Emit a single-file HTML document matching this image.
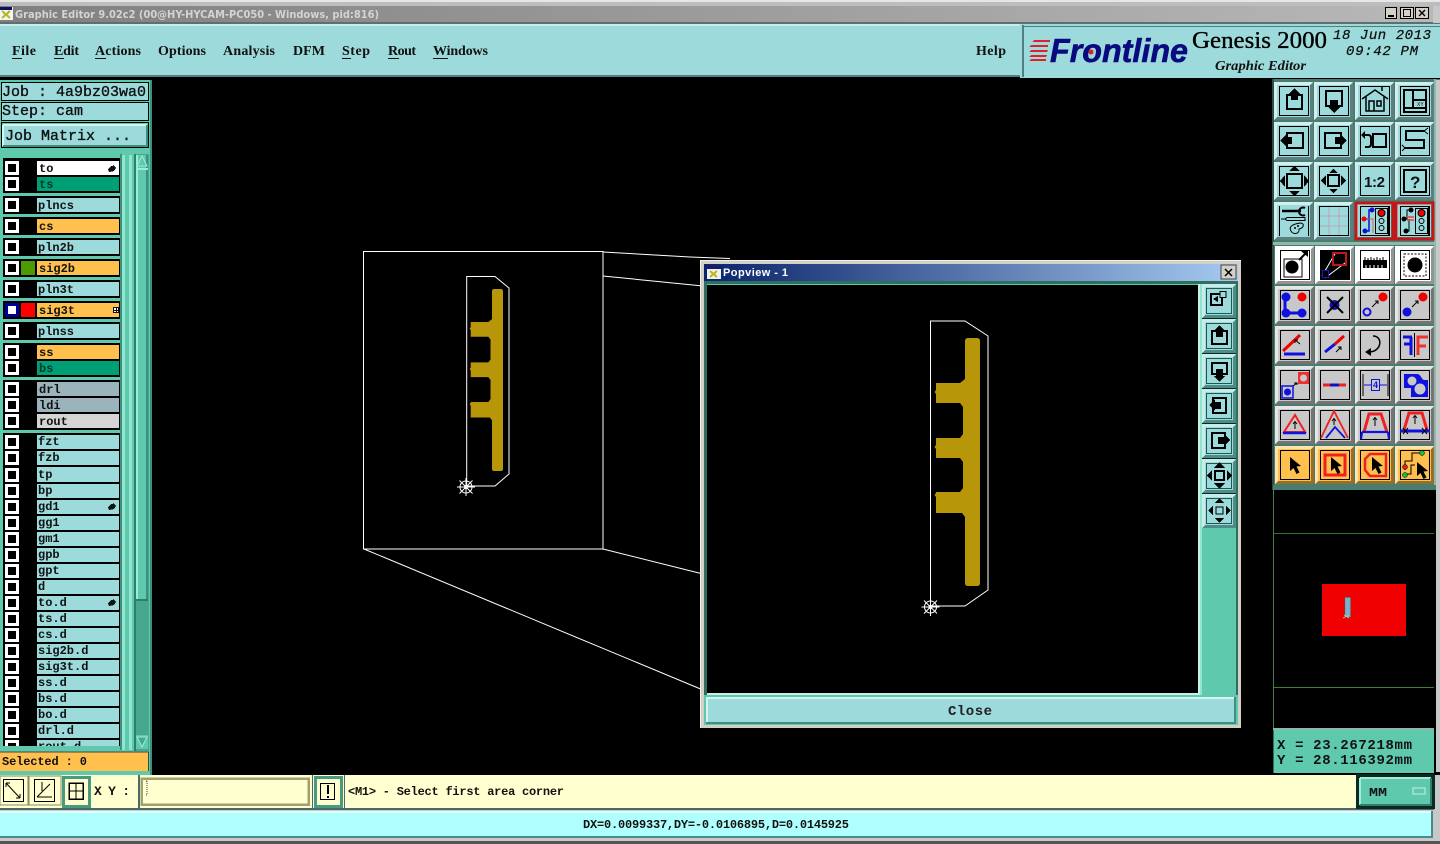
<!DOCTYPE html>
<html><head><meta charset="utf-8"><title>Graphic Editor</title>
<style>
html,body{margin:0;padding:0;background:#000;width:1440px;height:844px;overflow:hidden}
svg{display:block}
.m{font-family:"Liberation Mono",monospace;font-weight:bold}
.s{font-family:"Liberation Serif",serif;font-weight:bold}
.l{font-family:"Liberation Mono",monospace;font-weight:bold;font-size:12px;fill:#111}
</style></head><body>
<svg width="1440" height="844" viewBox="0 0 1440 844" xmlns="http://www.w3.org/2000/svg" shape-rendering="crispEdges">
<defs>
<linearGradient id="tg" x1="0" x2="1" y1="0" y2="0"><stop offset="0" stop-color="#808080"/><stop offset="1" stop-color="#b8b8b8"/></linearGradient>
<linearGradient id="pg" x1="0" x2="1" y1="0" y2="0"><stop offset="0" stop-color="#0a246a"/><stop offset="1" stop-color="#a6caf0"/></linearGradient>
<g id="bev"><rect width="39" height="38"/><polygon points="0,0 39,0 36,3 3,3 3,35 0,38" fill="#fff" fill-opacity=".55"/><polygon points="39,38 0,38 3,35 36,35 36,3 39,0" fill="#000" fill-opacity=".42"/><rect x="5.5" y="4.5" width="29" height="29" fill="none" stroke="#000"/></g>
<g id="sb"><rect width="34" height="34"/><polygon points="0,0 34,0 31,3 3,3 3,31 0,34" fill="#fff" fill-opacity=".45"/><polygon points="34,34 0,34 3,31 31,31 31,3 34,0" fill="#004030" fill-opacity=".5"/><rect x="4.5" y="4.5" width="25" height="25" fill="none" stroke="#1a5a50"/></g>
<g id="cur"><polygon points="15,11 15,25 18.5,22 21.5,28 24.5,26.5 21.5,20.5 26,20"/></g>
<g id="cross" fill="none" stroke="#fff" stroke-width="1" shape-rendering="auto"><circle r="6"/><path d="M-9,0H9M0,-9V9M-6.5,-6.5L6.5,6.5M-6.5,6.5L6.5,-6.5"/><circle r="1.5" fill="#fff"/></g>
<g id="cu"><path fill="#b8960a" shape-rendering="auto" d="M968,338H977Q980,338 980,341V583Q980,586 977,586H968Q965,586 965,583V517L962,513H936V503V497L934.500,495L936,493V492H960L963,488V462L960,458H936V449L934.500,447L936,445V438H960L963,434V407L960,403H936V394L934.500,392L936,390V383H960L965,379V341Q965,338 968,338Z"/></g>
<g id="chk"><rect x="0" y="0" width="14" height="14" fill="#fff"/><rect x="3" y="3" width="8" height="8" fill="#000"/></g>
<g id="hand"><polygon points="0,4 3,1 5,1 5,0 7,2 8,3 6,6 1,7"/></g>
</defs>

<rect width="1440" height="844" fill="#000"/>
<!-- top frame -->
<rect width="1440" height="2" fill="#e6e6e6"/>
<rect y="2" width="1440" height="4" fill="#bdbdbd"/>
<rect y="6" width="1440" height="17" fill="url(#tg)"/>
<rect y="22" width="1440" height="2" fill="#5f6f6f"/>
<rect y="24" width="1440" height="2" fill="#c8ecec"/>
<rect y="26" width="1440" height="49" fill="#9ddadb"/>
<rect y="75" width="1022" height="2" fill="#4f7f7f"/>
<rect y="77" width="1440" height="3" fill="#000"/>
<!-- title icon -->
<rect x="0" y="7" width="13" height="13" fill="#f4f4f4"/><rect x="0" y="7" width="12" height="3" fill="#101060"/>
<path d="M2,11L10,18M10,11L2,18" stroke="#b8b820" stroke-width="2"/>
<text x="15" y="18" font-family="'DejaVu Sans',sans-serif" font-weight="bold" font-size="11" fill="#d4d4d4" textLength="364" lengthAdjust="spacingAndGlyphs" shape-rendering="auto">Graphic Editor 9.02c2 (00@HY-HYCAM-PC050 - Windows, pid:816)</text>
<!-- win buttons -->
<g stroke="#000" fill="#d4d0c8"><rect x="1385.5" y="7.5" width="11" height="11"/><rect x="1400.5" y="7.5" width="13" height="11"/><rect x="1415.5" y="7.5" width="13" height="11"/></g>
<rect x="1388" y="15" width="6" height="2" fill="#000"/><rect x="1403.5" y="9.5" width="7" height="7" fill="none" stroke="#000"/><path d="M1419,10L1425,16M1425,10L1419,16" stroke="#000" stroke-width="1.4" shape-rendering="auto"/>
<rect x="1433" y="6" width="7" height="17" fill="#c8c8c8"/>
<!-- menu -->
<g class="s" font-size="14" fill="#111" shape-rendering="auto">
<text x="12" y="55" textLength="24">File</text><text x="54" y="55" textLength="25">Edit</text><text x="95" y="55" textLength="46">Actions</text><text x="158" y="55" textLength="48">Options</text><text x="223" y="55" textLength="52">Analysis</text><text x="293" y="55" textLength="32">DFM</text><text x="342" y="55" textLength="28">Step</text><text x="388" y="55" textLength="28">Rout</text><text x="433" y="55" textLength="55">Windows</text><text x="976" y="55" textLength="30">Help</text>
</g>
<g fill="#111"><rect x="12" y="58" width="10" height="1"/><rect x="54" y="58" width="10" height="1"/><rect x="95" y="58" width="11" height="1"/><rect x="342" y="58" width="9" height="1"/><rect x="388" y="58" width="11" height="1"/><rect x="433" y="58" width="15" height="1"/></g>
<!-- logo area -->
<rect x="1020" y="24" width="420" height="54" fill="#9ddadb"/>
<rect x="1022" y="25" width="2" height="52" fill="#4f8080"/><rect x="1024" y="26" width="416" height="1" fill="#4f7f7f"/>
<g fill="#e0202a"><polygon points="1034,40 1050,40 1050,42 1032,42"/><polygon points="1031,45 1048,45 1048,47 1029,47"/><polygon points="1031,50 1048,50 1047,52 1029,52"/><polygon points="1031,55 1047,55 1046,57 1029,57"/><polygon points="1031,59 1046,59 1046,61 1029,61"/></g>
<g shape-rendering="auto">
<text x="1050" y="62" font-family="'Liberation Sans',sans-serif" font-weight="bold" font-style="italic" font-size="33" fill="#0a0a80" stroke="#0a0a80" stroke-width=".6" textLength="138" lengthAdjust="spacingAndGlyphs">Frontline</text>
<circle cx="1091" cy="52" r="2.5" fill="#e02020"/>
<text x="1192" y="48" font-family="'Liberation Serif',serif" font-size="24" fill="#000" stroke="#000" stroke-width=".35" textLength="135" lengthAdjust="spacingAndGlyphs">Genesis 2000</text>
<text x="1215" y="70" class="s" font-style="italic" font-size="14" fill="#111" textLength="91" lengthAdjust="spacingAndGlyphs">Graphic Editor</text>
<text x="1333" y="39" font-family="'Liberation Mono',monospace" font-style="italic" font-size="14" fill="#111" stroke="#111" stroke-width=".25" textLength="98">18 Jun 2013</text>
<text x="1346" y="55" font-family="'Liberation Mono',monospace" font-style="italic" font-size="14" fill="#111" stroke="#111" stroke-width=".25" textLength="72">09:42 PM</text>
</g>

<!-- LEFT PANEL -->
<rect x="0" y="80" width="152" height="695" fill="#5ec9ad"/>
<rect x="150" y="80" width="2" height="695" fill="#3f8f80"/>
<g fill="#9ddadb" stroke="#000"><rect x="1.5" y="82.5" width="147" height="18"/><rect x="1.5" y="102.5" width="147" height="18"/></g>
<rect x="1.5" y="122.5" width="147" height="25" fill="#5ec9ad" stroke="#000"/>
<rect x="3" y="125" width="144" height="21" fill="#9ddadb"/>
<path d="M3,125H147M3,125V146" stroke="#d4f4f0" stroke-width="2" fill="none"/><path d="M147,125V146H3" stroke="#3f8f80" stroke-width="2" fill="none"/>
<g font-family="'Liberation Mono',monospace" font-size="15" fill="#111" stroke="#111" stroke-width=".35" shape-rendering="auto">
<text x="2" y="96" textLength="144">Job : 4a9bz03wa0</text>
<text x="2" y="115" textLength="81">Step: cam</text>
<text x="5" y="140" textLength="126">Job Matrix ...</text>
</g>

<!-- layer boxes -->
<g fill="#000">
<rect x="3" y="158" width="117" height="35"/><rect x="3" y="196" width="117" height="18"/><rect x="3" y="217" width="117" height="18"/><rect x="3" y="238" width="117" height="18"/><rect x="3" y="259" width="117" height="18"/><rect x="3" y="280" width="117" height="18"/><rect x="3" y="301" width="117" height="18"/><rect x="3" y="322" width="117" height="18"/><rect x="3" y="343" width="117" height="34"/><rect x="3" y="380" width="117" height="50"/><rect x="3" y="433" width="117" height="313"/>
</g>
<!-- labels -->
<rect x="37" y="161" width="82" height="14" fill="#fff"/><rect x="37" y="177" width="82" height="14" fill="#00a077"/>
<rect x="37" y="198" width="82" height="14" fill="#9ddadb"/><rect x="37" y="219" width="82" height="14" fill="#ffc04d"/>
<rect x="37" y="240" width="82" height="14" fill="#9ddadb"/><rect x="37" y="261" width="82" height="14" fill="#ffc04d"/>
<rect x="37" y="282" width="82" height="14" fill="#9ddadb"/><rect x="37" y="303" width="82" height="14" fill="#ffc04d"/>
<rect x="37" y="324" width="82" height="14" fill="#9ddadb"/>
<rect x="37" y="345" width="82" height="14" fill="#ffc04d"/><rect x="37" y="361" width="82" height="14" fill="#00a077"/>
<rect x="37" y="382" width="82" height="14" fill="#9ab3bd"/><rect x="37" y="398" width="82" height="14" fill="#9ab3bd"/><rect x="37" y="414" width="82" height="14" fill="#d5d5d5"/>
<g fill="#9ddadb">
<rect x="37" y="435" width="82" height="14"/><rect x="37" y="451" width="82" height="14"/><rect x="37" y="467" width="82" height="15"/><rect x="37" y="484" width="82" height="14"/><rect x="37" y="500" width="82" height="14"/><rect x="37" y="516" width="82" height="14"/><rect x="37" y="532" width="82" height="14"/><rect x="37" y="548" width="82" height="14"/><rect x="37" y="564" width="82" height="14"/><rect x="37" y="580" width="82" height="14"/><rect x="37" y="596" width="82" height="14"/><rect x="37" y="612" width="82" height="14"/><rect x="37" y="628" width="82" height="14"/><rect x="37" y="644" width="82" height="14"/><rect x="37" y="660" width="82" height="14"/><rect x="37" y="676" width="82" height="14"/><rect x="37" y="692" width="82" height="14"/><rect x="37" y="708" width="82" height="14"/><rect x="37" y="724" width="82" height="14"/><rect x="37" y="740" width="82" height="6"/>
</g>
<!-- colour chips -->
<rect x="21" y="261" width="14" height="14" fill="#4a9a00"/><rect x="21" y="303" width="14" height="14" fill="#ff0000"/><rect x="5" y="303" width="14" height="14" fill="#000098"/>
<!-- checkboxes -->
<use href="#chk" x="5" y="161"/><use href="#chk" x="5" y="177"/><use href="#chk" x="5" y="198"/><use href="#chk" x="5" y="219"/><use href="#chk" x="5" y="240"/><use href="#chk" x="5" y="261"/><use href="#chk" x="5" y="282"/>
<rect x="8" y="306" width="8" height="8" fill="#fff"/>
<use href="#chk" x="5" y="324"/><use href="#chk" x="5" y="345"/><use href="#chk" x="5" y="361"/><use href="#chk" x="5" y="382"/><use href="#chk" x="5" y="398"/><use href="#chk" x="5" y="414"/>
<use href="#chk" x="5" y="435"/><use href="#chk" x="5" y="451"/><use href="#chk" x="5" y="468"/><use href="#chk" x="5" y="484"/><use href="#chk" x="5" y="500"/><use href="#chk" x="5" y="516"/><use href="#chk" x="5" y="532"/><use href="#chk" x="5" y="548"/><use href="#chk" x="5" y="564"/><use href="#chk" x="5" y="580"/><use href="#chk" x="5" y="596"/><use href="#chk" x="5" y="612"/><use href="#chk" x="5" y="628"/><use href="#chk" x="5" y="644"/><use href="#chk" x="5" y="660"/><use href="#chk" x="5" y="676"/><use href="#chk" x="5" y="692"/><use href="#chk" x="5" y="708"/><use href="#chk" x="5" y="724"/><rect x="5" y="740" width="14" height="6" fill="#fff"/><rect x="8" y="743" width="8" height="3" fill="#000"/>
<!-- label text -->
<g class="l" shape-rendering="auto">
<text x="39" y="172">to</text><text x="39" y="188" style="fill:#03382a">ts</text><text x="38" y="209">plncs</text><text x="39" y="230">cs</text><text x="38" y="251">pln2b</text><text x="39" y="272">sig2b</text><text x="38" y="293">pln3t</text><text x="39" y="314">sig3t</text><text x="38" y="335">plnss</text><text x="39" y="356">ss</text><text x="39" y="372" style="fill:#03382a">bs</text><text x="39" y="393">drl</text><text x="39" y="409">ldi</text><text x="39" y="425">rout</text>
<text x="38" y="445">fzt</text><text x="38" y="461">fzb</text><text x="38" y="478">tp</text><text x="38" y="494">bp</text><text x="38" y="510">gd1</text><text x="38" y="526">gg1</text><text x="38" y="542">gm1</text><text x="38" y="558">gpb</text><text x="38" y="574">gpt</text><text x="38" y="590">d</text><text x="38" y="606">to.d</text><text x="38" y="622">ts.d</text><text x="38" y="638">cs.d</text><text x="38" y="654">sig2b.d</text><text x="38" y="670">sig3t.d</text><text x="38" y="686">ss.d</text><text x="38" y="702">bs.d</text><text x="38" y="718">bo.d</text><text x="38" y="734">drl.d</text>
</g>
<rect x="38" y="741" width="46" height="5" fill="#9ddadb"/>
<text x="38" y="750" class="l" shape-rendering="auto">rout.d</text>
<rect x="3" y="746" width="117" height="6" fill="#5ec9ad"/>
<!-- small marks -->
<use href="#hand" x="108" y="165" fill="#111"/><use href="#hand" x="108" y="503" fill="#111"/><use href="#hand" x="108" y="599" fill="#111"/>
<rect x="113" y="307" width="6" height="6" fill="#111"/><rect x="114" y="308" width="2" height="2" fill="#fff"/><rect x="117" y="308" width="1" height="2" fill="#fff"/><rect x="114" y="311" width="2" height="1" fill="#fff"/><rect x="117" y="311" width="1" height="1" fill="#fff"/>
<!-- stripes + scrollbar -->
<rect x="120" y="154" width="2" height="596" fill="#3f8f80"/><rect x="122" y="155" width="3" height="595" fill="#8fe6cc"/><rect x="125" y="155" width="4" height="595" fill="#5ec9ad"/><rect x="129" y="155" width="3" height="595" fill="#8fe6cc"/><rect x="132" y="155" width="2" height="595" fill="#5ec9ad"/>
<rect x="134" y="154" width="15" height="597" fill="#47a88e"/><rect x="134" y="154" width="2" height="597" fill="#2f7d6c"/>
<rect x="136" y="155" width="12" height="445" fill="#5ec9ad"/><rect x="136" y="155" width="2" height="445" fill="#9aeed8"/><rect x="146" y="155" width="2" height="445" fill="#3f8f80"/><rect x="136" y="599" width="12" height="2" fill="#2f7d6c"/>
<rect x="136" y="168" width="12" height="2" fill="#9aeed8"/>
<polygon points="142,156 147,166 137,166" fill="#5ec9ad" stroke="#9aeed8" shape-rendering="auto"/>
<rect x="136" y="735" width="12" height="14" fill="#5ec9ad"/><polygon points="142,747 147,737 137,737" fill="#47a88e" stroke="#9aeed8" shape-rendering="auto"/>
<!-- selected -->
<rect x="0" y="752" width="149" height="19" fill="#ffc04d"/><rect x="148" y="752" width="1" height="19" fill="#444"/><path d="M0,752H149" stroke="#444"/>
<text x="2" y="765" class="m" font-size="12" fill="#111" textLength="85" shape-rendering="auto">Selected : 0</text>

<!-- CANVAS DRAWING -->
<g fill="none" stroke="#fff" stroke-width="1" shape-rendering="auto">
<rect x="363.5" y="251.5" width="239.5" height="297.5"/>
<path d="M603,252L690,257L730,258.500M603,276L703,286M603,549L703,574M364,549L703,690"/>
<path d="M466.7,276.5H495L509,288V474L495,486H466.7Z"/>
</g>
<g transform="translate(503,289) scale(.734) translate(-980,-338)"><use href="#cu"/></g>
<use href="#cross" x="466" y="487"/>

<!-- POPVIEW -->
<rect x="700" y="260" width="541" height="468" fill="#d4d0c8"/>
<rect x="700" y="260" width="541" height="1" fill="#f0f0f0"/><rect x="700" y="260" width="1" height="468" fill="#f0f0f0"/>
<rect x="704" y="264" width="534" height="17" fill="url(#pg)"/>
<rect x="707" y="266" width="14" height="13" fill="#f0f0f0"/><rect x="707" y="266" width="14" height="3" fill="#1a1a6a"/><path d="M710,271L717,277M717,271L710,277" stroke="#b8b820" stroke-width="2"/>
<text x="723" y="276" font-family="'Liberation Sans',sans-serif" font-weight="bold" font-size="11" fill="#fff" textLength="65" shape-rendering="auto">Popview - 1</text>
<rect x="1221" y="265" width="15" height="14" fill="#d4d0c8" stroke="#444"/><path d="M1225,269L1232,276M1232,269L1225,276" stroke="#000" stroke-width="1.5" shape-rendering="auto"/>
<rect x="704" y="281" width="534" height="444" fill="#5ec9ad"/>
<rect x="704" y="281" width="534" height="3" fill="#2f6f60"/><rect x="704" y="281" width="3" height="415" fill="#2f6f60"/>
<rect x="707" y="285" width="491" height="408" fill="#000"/>
<rect x="707" y="693" width="493" height="2" fill="#c8f0e4"/><rect x="1198" y="284" width="2" height="411" fill="#c8f0e4"/>
<rect x="1200" y="284" width="2" height="411" fill="#8fe6cc"/>
<rect x="1236" y="284" width="2" height="411" fill="#2f6f60"/>
<rect x="1202" y="284" width="34" height="244" fill="#0a2a24"/>
<rect x="704" y="695" width="534" height="2" fill="#5ec9ad"/>
<rect x="706" y="697" width="530" height="27" fill="#9ddadb"/>
<path d="M706,698H1236M707,697V724" stroke="#d4f4f0" stroke-width="2" fill="none"/><path d="M1235,697V723H706" stroke="#3f8f80" stroke-width="2" fill="none"/>
<text x="948" y="715" font-family="'Liberation Mono',monospace" font-size="14" font-weight="bold" fill="#222" textLength="44" shape-rendering="auto">Close</text>
<g fill="none" stroke="#fff" stroke-width="1" shape-rendering="auto"><path d="M930.5,321H965L988,336V590L965,606H930.5Z"/></g>
<use href="#cu"/>
<use href="#cross" x="930.5" y="607"/>
<!-- side buttons -->
<g fill="#9ddadb">
<use href="#sb" x="1202" y="284"/><use href="#sb" x="1202" y="319"/><use href="#sb" x="1202" y="354"/><use href="#sb" x="1202" y="389"/><use href="#sb" x="1202" y="424"/><use href="#sb" x="1202" y="459"/><use href="#sb" x="1202" y="494"/>
</g>
<g fill="#000" stroke="none">
<rect x="1211" y="294" width="11" height="11" fill="none" stroke="#000" stroke-width="2"/><rect x="1220" y="291.5" width="6" height="6" fill="#9ddadb" stroke="#000"/><polygon points="1213,299 1218,296 1218,302"/>
<rect x="1212" y="331" width="15" height="13" fill="none" stroke="#000" stroke-width="2"/><polygon points="1219.5,325 1225,331 1223,331 1223,337 1216,337 1216,331 1214,331"/>
<rect x="1212" y="363" width="15" height="11" fill="none" stroke="#000" stroke-width="2"/><polygon points="1219.5,382 1225,376 1223,376 1223,369 1216,369 1216,376 1214,376"/>
<rect x="1213" y="398" width="13" height="15" fill="none" stroke="#000" stroke-width="2"/><polygon points="1209,405 1215,399 1215,402 1221,402 1221,409 1215,409 1215,411"/>
<rect x="1212" y="433" width="13" height="15" fill="none" stroke="#000" stroke-width="2"/><polygon points="1230,440 1224,434 1224,437 1218,437 1218,444 1224,444 1224,446"/>
<rect x="1215" y="471" width="9" height="9" fill="none" stroke="#000" stroke-width="2"/><polygon points="1219.5,462 1225,468 1214,468"/><polygon points="1219.5,489 1225,483 1214,483"/><polygon points="1207,475.500 1212,470 1212,481"/><polygon points="1232,475.500 1227,470 1227,481"/>
<rect x="1216" y="507" width="7" height="7" fill="none" stroke="#000"/><polygon points="1219.5,498 1224,503 1215,503"/><polygon points="1219.5,523 1224,518 1215,518"/><polygon points="1208,510.500 1213,506 1213,515"/><polygon points="1231,510.500 1226,506 1226,515"/>
</g>

<!-- RIGHT TOOLBAR -->
<rect x="1272" y="79" width="168" height="411" fill="#4a7c70"/>
<rect x="1272" y="79" width="2" height="411" fill="#2f4f48"/>
<rect x="1434" y="79" width="2" height="411" fill="#8fb8ac"/>
<rect x="1436" y="80" width="4" height="692" fill="#c8c8c8"/>
<rect x="1273" y="242" width="163" height="3" fill="#8fb8ac"/>
<!-- Teal group -->
<g fill="#9ddadb">
<use href="#bev" x="1274" y="82"/><use href="#bev" x="1314" y="82"/><use href="#bev" x="1355" y="82"/><use href="#bev" x="1395" y="82"/>
<use href="#bev" x="1274" y="122"/><use href="#bev" x="1314" y="122"/><use href="#bev" x="1355" y="122"/><use href="#bev" x="1395" y="122"/>
<use href="#bev" x="1274" y="162"/><use href="#bev" x="1314" y="162"/><use href="#bev" x="1355" y="162"/><use href="#bev" x="1395" y="162"/>
<use href="#bev" x="1274" y="202"/><use href="#bev" x="1314" y="202"/><use href="#bev" x="1355" y="202"/><use href="#bev" x="1395" y="202"/>
</g>
<g fill="#fff"><use href="#bev" x="1275" y="246"/><use href="#bev" x="1315" y="246"/><use href="#bev" x="1355" y="246"/><use href="#bev" x="1395" y="246"/></g>
<g fill="#c8c8c8">
<use href="#bev" x="1275" y="286"/><use href="#bev" x="1315" y="286"/><use href="#bev" x="1355" y="286"/><use href="#bev" x="1395" y="286"/>
<use href="#bev" x="1275" y="326"/><use href="#bev" x="1315" y="326"/><use href="#bev" x="1355" y="326"/><use href="#bev" x="1395" y="326"/>
<use href="#bev" x="1275" y="366"/><use href="#bev" x="1315" y="366"/><use href="#bev" x="1355" y="366"/><use href="#bev" x="1395" y="366"/>
<use href="#bev" x="1275" y="406"/><use href="#bev" x="1315" y="406"/><use href="#bev" x="1355" y="406"/><use href="#bev" x="1395" y="406"/>
</g>
<g fill="#ffc04d"><use href="#bev" x="1275" y="446"/><use href="#bev" x="1315" y="446"/><use href="#bev" x="1355" y="446"/><use href="#bev" x="1395" y="446"/></g>

<!-- icons row 1 -->
<g transform="translate(1274,82)"><rect x="13" y="13" width="15" height="14" fill="none" stroke="#000" stroke-width="2"/><polygon points="20.5,6 26,12 24,12 24,18 17,18 17,12 15,12"/></g>
<g transform="translate(1314,82)"><rect x="12" y="9" width="16" height="15" fill="none" stroke="#000" stroke-width="2"/><polygon points="20,31 26,25 24,25 24,18 16,18 16,25 14,25"/></g>
<g transform="translate(1355,82)" fill="none" stroke="#000" stroke-width="1.5" shape-rendering="auto"><path d="M7,17L20,8L33,17M11,15V29H29V15M14,19h5v10h-5zM22,19h4v5h-4z M27,9V5"/></g>
<g transform="translate(1395,82)" fill="none" stroke="#000" stroke-width="2"><rect x="9" y="8" width="22" height="22"/><path d="M18,8V26M9,26H31M18,18H31"/><text x="22" y="24" font-size="5" font-family="'Liberation Sans',sans-serif" fill="#000" stroke="none">XY</text></g>
<!-- row 2 -->
<g transform="translate(1274,122)"><rect x="13" y="11" width="16" height="15" fill="none" stroke="#000" stroke-width="2"/><polygon points="6,18.500 12,13 12,15 18,15 18,22 12,22 12,24"/></g>
<g transform="translate(1314,122)"><rect x="11" y="11" width="16" height="15" fill="none" stroke="#000" stroke-width="2"/><polygon points="33,18.500 27,13 27,15 21,15 21,22 27,22 27,24"/></g>
<g transform="translate(1355,122)" shape-rendering="auto"><rect x="18" y="12" width="13" height="13" fill="none" stroke="#000" stroke-width="2"/><path d="M10,13H13Q16,13 16,16V22Q16,25 13,25H10" fill="none" stroke="#000" stroke-width="2"/><polygon points="6,13 10,9 10,17"/></g>
<g transform="translate(1395,122)" fill="none" stroke="#000" stroke-width="2"><path d="M29,9H11V18H29V26H9"/><path d="M33,6L29,9L33,12M7,23L10,26L7,29" stroke-width="1"/></g>
<!-- row 3 -->
<g transform="translate(1274,162)"><rect x="13" y="12" width="15" height="14" fill="none" stroke="#000" stroke-width="2"/><polygon points="20.500,4 26,9 15,9"/><polygon points="20.500,34 26,29 15,29"/><polygon points="6,19 11,13 11,25"/><polygon points="35,19 30,13 30,25"/></g>
<g transform="translate(1314,162)"><rect x="14" y="13" width="11" height="11" fill="none" stroke="#000" stroke-width="2"/><polygon points="19.500,7 24,11 15,11"/><polygon points="19.500,31 24,27 15,27"/><polygon points="7,18.500 12,13 12,24"/><polygon points="32,18.500 27,13 27,24"/></g>
<text x="1364" y="187" font-family="'Liberation Sans',sans-serif" font-weight="bold" font-size="15" fill="#111" textLength="21" shape-rendering="auto">1:2</text>
<g transform="translate(1395,162)"><rect x="9" y="8" width="22" height="22" fill="none" stroke="#000" stroke-width="2"/><text x="15" y="26" font-family="'Liberation Sans',sans-serif" font-weight="bold" font-size="17" fill="#111" shape-rendering="auto">?</text></g>
<!-- row 4 -->
<g transform="translate(1274,202)" shape-rendering="auto"><rect x="6" y="3" width="28" height="32" fill="#9ddadb"/><path d="M8,9H27" stroke="#000" stroke-width="2.5"/><path d="M31,6a4,4 0 1 0 0,7" fill="none" stroke="#000" stroke-width="2"/><path d="M7,17H11L13,15.500H31V18.500H13L11,17" fill="none" stroke="#000"/><path d="M17,29C14,24 20,22 26,21C31,21 30,26 25,27C26,32 19,33 17,29Z" fill="none" stroke="#000"/><circle cx="21" cy="26" r="1"/><circle cx="24" cy="24" r="1"/></g>
<g transform="translate(1314,202)" stroke="#b8a8b4" fill="none"><path d="M15,5V33M25,5V33M6,14H34M6,24H34"/></g>
<g transform="translate(1355,202)" shape-rendering="auto"><rect x="1" y="1" width="37" height="36" fill="none" stroke="#c01818" stroke-width="3"/><rect x="5.500" y="4.500" width="28" height="29" fill="#9ddadb" stroke="#000"/><rect x="20.500" y="6.500" width="12" height="25" fill="none" stroke="#000"/><circle cx="26.500" cy="11" r="3.500" fill="#f00000" stroke="#000"/><circle cx="26.500" cy="19" r="2.500" fill="none" stroke="#000"/><circle cx="26.500" cy="26" r="2.500" fill="none" stroke="#000"/><path d="M9,17H14V8H17M9,29H14V17" fill="none" stroke="#1010d0" stroke-width="1.500"/><path d="M11,17H18V31" stroke="#d06060" fill="none"/><circle cx="17" cy="8" r="2.500" fill="#1010d0"/><circle cx="9" cy="17" r="2.500" fill="#f00000"/><circle cx="10" cy="29" r="2.500" fill="#1010d0"/></g>
<g transform="translate(1395,202)" shape-rendering="auto"><rect x="1" y="1" width="37" height="36" fill="none" stroke="#c01818" stroke-width="3"/><rect x="5.500" y="4.500" width="28" height="29" fill="#9ddadb" stroke="#000"/><rect x="20.500" y="6.500" width="12" height="25" fill="none" stroke="#000"/><circle cx="26.500" cy="11" r="3.500" fill="#f00000" stroke="#000"/><circle cx="26.500" cy="19" r="2.500" fill="none" stroke="#000"/><circle cx="26.500" cy="26" r="2.500" fill="none" stroke="#000"/><path d="M9,17H12V8H16M10,29H14V17" fill="none" stroke="#000"/><path d="M12,15H19M12,18H19" stroke="#f04040" stroke-width="1.500"/><circle cx="16" cy="8" r="2.500"/><circle cx="9" cy="17" r="2.500"/><circle cx="11" cy="29" r="2.500"/></g>

<!-- lower block row 1 -->
<g transform="translate(1275,246)" shape-rendering="auto"><rect x="9" y="13" width="18" height="18" fill="none" stroke="#000"/><circle cx="17" cy="21" r="6.500"/><path d="M24,14L31,7" stroke="#000" stroke-width="2"/><polygon points="33,4 33,11 26,5"/></g>
<g transform="translate(1315,246)"><rect x="5" y="4" width="30" height="30" fill="#000"/><path d="M7,30L21,6M10,32L30,17" stroke="#fff" shape-rendering="auto"/><rect x="18" y="7" width="13" height="12" fill="none" stroke="#c01818" stroke-width="2"/><rect x="7.500" y="24.500" width="6" height="7" fill="#000" stroke="#1818c0"/></g>
<g transform="translate(1355,246)"><rect x="8" y="14" width="24" height="8" fill="#000"/><path d="M10,14v-3M13,14v-2M16,14v-3M19,14v-2M22,14v-3M25,14v-2M28,14v-3" stroke="#000"/><path d="M11,19v3M15,19v3M19,19v3M23,19v3M27,19v3" stroke="#fff"/></g>
<g transform="translate(1395,246)" shape-rendering="auto"><rect x="9" y="8" width="22" height="22" fill="none" stroke="#000" stroke-dasharray="2 1.500"/><circle cx="20" cy="19" r="7.500"/></g>
<!-- row 2 -->
<g transform="translate(1275,286)" shape-rendering="auto"><path d="M10,12V27H27" stroke="#1010e0" stroke-width="3" fill="none"/><circle cx="11" cy="11" r="4.500" fill="#1010e0"/><circle cx="11" cy="27" r="4.500" fill="#1010e0"/><circle cx="27" cy="27" r="4.500" fill="#1010e0"/><circle cx="27" cy="11" r="4.500" fill="#f00000"/></g>
<g transform="translate(1315,286)" shape-rendering="auto"><circle cx="19.500" cy="19" r="5" fill="#1010c0"/><path d="M12,11L28,27M28,11L12,27" stroke="#000" stroke-width="2"/></g>
<g transform="translate(1355,286)" shape-rendering="auto"><circle cx="28" cy="11" r="4.500" fill="#f00000"/><circle cx="12" cy="26" r="3.500" fill="none" stroke="#1010e0" stroke-width="2"/><path d="M17,21L23,15M20,15H23V18" stroke="#000" fill="none"/></g>
<g transform="translate(1395,286)" shape-rendering="auto"><circle cx="28" cy="11" r="4.500" fill="#f00000"/><circle cx="12" cy="26" r="4.500" fill="#1010e0"/><path d="M17,21L23,15M20,15H23V18" stroke="#000" fill="none"/></g>
<!-- row 3 -->
<g transform="translate(1275,326)" shape-rendering="auto"><path d="M8,25L25,9" stroke="#f00000" stroke-width="3"/><path d="M9,28H30" stroke="#1010e0" stroke-width="3"/><path d="M25,18L20,14M20,17V14H23" stroke="#000" fill="none"/></g>
<g transform="translate(1315,326)" shape-rendering="auto"><path d="M10,26L20,18" stroke="#1010e0" stroke-width="3"/><path d="M20,18L29,10" stroke="#f00000" stroke-width="3"/><path d="M21,26L26,21M23,21H26V24" stroke="#000" fill="none"/></g>
<g transform="translate(1355,326)" shape-rendering="auto"><path d="M18,10C28,10 27,25 15,26" fill="none" stroke="#000" stroke-width="1.500"/><polygon points="10,26 16,22 16,30"/></g>
<g transform="translate(1395,326)"><path d="M19.500,7V31" stroke="#000"/><path d="M17,11H8M17,18H9M16,11V29" stroke="#1010e0" stroke-width="3" fill="none"/><path d="M33,11H23V29M23,20H31" stroke="#f03030" stroke-width="3" fill="none"/></g>
<!-- row 4 -->
<g transform="translate(1275,366)" shape-rendering="auto"><rect x="7" y="20" width="11" height="12" fill="none" stroke="#1010e0" stroke-width="1.500"/><circle cx="12.500" cy="26" r="3.500" fill="#1010e0"/><rect x="23" y="6" width="11" height="12" fill="#f03030"/><circle cx="28.500" cy="12" r="3.500" fill="#c8c8c8"/><path d="M18,20L22,17M19,17H22V19" stroke="#000" fill="none"/></g>
<g transform="translate(1315,366)"><path d="M8,19H31" stroke="#f02020" stroke-width="3"/><path d="M15,19H24" stroke="#1010c0" stroke-width="3"/></g>
<g transform="translate(1355,366)"><path d="M8,8V30M33,8V30" stroke="#000"/><path d="M9,19H32" stroke="#1010e0"/><rect x="16.500" y="13.500" width="8" height="11" fill="#c8c8c8" stroke="#1010e0"/><text x="18" y="22" font-size="9" font-family="'Liberation Sans',sans-serif" font-weight="bold" fill="#1010e0">4</text></g>
<g transform="translate(1395,366)" shape-rendering="auto"><path d="M9,8H22C26,8 26,13 29,14H33V31H16V22H9Z" fill="#1010e0"/><circle cx="17" cy="15" r="4.500" fill="#c8c8c8"/><circle cx="25" cy="23" r="5.500" fill="#c8c8c8"/></g>
<!-- row 5 -->
<g transform="translate(1275,406)" shape-rendering="auto"><path d="M20,9L30,26H9Z" fill="none" stroke="#f02020" stroke-width="2"/><path d="M8,27H31" stroke="#1010e0" stroke-width="2.500"/><path d="M20,23V16M18,18L20,15.500L22,18" stroke="#000" fill="none"/></g>
<g transform="translate(1315,406)" shape-rendering="auto"><path d="M6,32L19,5L33,32" fill="none" stroke="#f02020" stroke-width="1.800"/><path d="M11,32L20,21L30,32" fill="none" stroke="#1010e0" stroke-width="1.800"/><path d="M19,19V13M17,15L19,12.500L21,15" stroke="#000" fill="none"/></g>
<g transform="translate(1355,406)" shape-rendering="auto"><path d="M9,26L14,8H26L32,26" fill="none" stroke="#f02020" stroke-width="3"/><path d="M7,26H33M7,26L6,33M33,26L34,33" fill="none" stroke="#1010e0" stroke-width="2.200"/><path d="M20,20V12M18,14L20,11.500L22,14" stroke="#000" fill="none"/></g>
<g transform="translate(1395,406)" shape-rendering="auto"><path d="M9,24L14,7H27L32,24" fill="none" stroke="#f02020" stroke-width="3"/><path d="M5,25H35" stroke="#1010e0" stroke-width="3"/><path d="M8,22L13,28M13,22L8,28M27,22L32,28M32,22L27,28" stroke="#000"/><path d="M20,18V10M18,12L20,9.500L22,12" stroke="#000" fill="none"/></g>
<!-- row 6 -->
<g transform="translate(1275,446)" shape-rendering="auto"><use href="#cur"/></g>
<g transform="translate(1315,446)" shape-rendering="auto"><rect x="10" y="9" width="20" height="20" fill="none" stroke="#f02020" stroke-width="3"/><use href="#cur" x="1"/></g>
<g transform="translate(1355,446)" shape-rendering="auto"><path d="M15,8H31V30H15L10,24V13Z" fill="none" stroke="#f02020" stroke-width="2.500"/><use href="#cur" x="2"/></g>
<g transform="translate(1395,446)" shape-rendering="auto"><path d="M10,24V15H17V7H26M10,28H16V19H20" fill="none" stroke="#000"/><circle cx="27" cy="7" r="2.500" fill="#10c040" stroke="#000" stroke-width=".5"/><circle cx="10" cy="21" r="2.500" fill="#e02020" stroke="#000" stroke-width=".5"/><circle cx="10" cy="29" r="2.500" fill="#10c040" stroke="#000" stroke-width=".5"/><use href="#cur" x="7" y="5"/></g>

<rect x="1273" y="485" width="163" height="5" fill="#4a7c70"/>
<!-- MINIMAP -->
<rect x="1274" y="490" width="160" height="238" fill="#000"/>
<rect x="1273" y="490" width="1" height="238" fill="#3f7f50"/>
<rect x="1274" y="533" width="160" height="1" fill="#2f6f30"/><rect x="1274" y="687" width="160" height="1" fill="#3f7f30"/>
<rect x="1322" y="584" width="84" height="52" fill="#f00000"/>
<rect x="1345.500" y="598" width="4" height="18" fill="#a0a0c0" stroke="#30c8d8" stroke-width="1.500"/>
<path d="M1343,618L1349,615M1344,615L1349,618" stroke="#b0c0c0"/>
<!-- coords -->
<rect x="1273" y="728" width="161" height="2" fill="#8fb8ac"/>
<rect x="1273" y="730" width="161" height="43" fill="#5ec9ad"/>
<rect x="1273" y="730" width="1" height="43" fill="#2f6f60"/>
<g class="m" font-size="14" fill="#111" shape-rendering="auto">
<text x="1277" y="749" textLength="135">X = 23.267218mm</text>
<text x="1277" y="764" textLength="135">Y = 28.116392mm</text>
</g>

<!-- BOTTOM BAR -->
<rect x="0" y="775" width="1358" height="33" fill="#ffffd0"/>
<rect x="0" y="808" width="1440" height="2" fill="#4a6a6a"/>
<rect x="1434" y="775" width="6" height="36" fill="#c8c8c8"/>
<rect x="0" y="776" width="28" height="29" fill="#ffffd0" stroke="#8a8a60"/>
<rect x="29" y="776" width="32" height="29" fill="#ffffd0" stroke="#8a8a60"/>
<rect x="3.500" y="779.500" width="20" height="22" fill="none" stroke="#000"/><path d="M6,783L20,798M6,783h4M6,783v4M20,798h-4M20,798v-4" stroke="#000" fill="none" shape-rendering="auto"/>
<rect x="34.500" y="779.500" width="20" height="22" fill="none" stroke="#000"/><path d="M37,797H52M37,797L50,784M42,782V791" stroke="#000" fill="none" shape-rendering="auto"/>
<rect x="62" y="776" width="29" height="32" fill="#ffffd0"/><rect x="63.500" y="777.500" width="26" height="29" fill="none" stroke="#4a9a80" stroke-width="3"/>
<rect x="69" y="783" width="14" height="16" fill="none" stroke="#000" stroke-width="1.500"/><path d="M76,783V799M69,791H83" stroke="#000"/>
<text x="94" y="795" class="m" font-size="13" fill="#111" textLength="36" shape-rendering="auto">X Y :</text>
<rect x="138" y="775" width="2" height="33" fill="#4a6a6a"/>
<rect x="141.500" y="778.500" width="167" height="26" fill="#ffffd0" stroke="#a0a070" stroke-width="2.500"/>
<path d="M147,781V795M146,781h2M146,795h2" stroke="#444" stroke-dasharray="1 1"/>
<rect x="312" y="775" width="1" height="33" fill="#4a6a6a"/>
<rect x="314" y="776" width="29" height="32" fill="#ffffd0"/><rect x="315.500" y="777.500" width="26" height="29" fill="none" stroke="#4a9a80" stroke-width="3"/>
<rect x="320.500" y="783.500" width="14" height="16" fill="none" stroke="#000"/><rect x="327" y="785" width="2" height="9" fill="#000"/><rect x="327" y="796" width="2" height="2" fill="#000"/>
<rect x="344" y="775" width="1" height="33" fill="#4a6a6a"/>
<text x="348" y="795" class="m" font-size="12" fill="#111" textLength="216" shape-rendering="auto">&lt;M1&gt; - Select first area corner</text>
<!-- MM -->
<rect x="1356" y="774" width="79" height="35" fill="#0a2a24"/>
<rect x="1360" y="778" width="71" height="27" fill="#5ec9ad"/>
<path d="M1360,778H1431M1360,778V805" stroke="#a8ecd8" stroke-width="2" fill="none"/><path d="M1431,778V805H1360" stroke="#2f7d6c" stroke-width="2" fill="none"/>
<text x="1369" y="796" class="m" font-size="12" fill="#111" textLength="18" lengthAdjust="spacingAndGlyphs" shape-rendering="auto">MM</text>
<rect x="1413" y="788" width="12" height="6" fill="#5ec9ad" stroke="#c8f0e4"/>

<!-- STATUS -->
<rect x="0" y="810" width="1440" height="34" fill="#c8c8c8"/>
<rect x="0" y="811" width="1433" height="27" fill="#b0ffff"/>
<rect x="0" y="811" width="1433" height="2" fill="#dcffff"/>
<rect x="0" y="836" width="1433" height="2" fill="#4a8a8a"/><rect x="1431" y="811" width="2" height="27" fill="#4a8a8a"/>
<rect x="0" y="841" width="1440" height="3" fill="#555"/>
<text x="583" y="828" class="m" font-size="12" fill="#111" textLength="266" shape-rendering="auto">DX=0.0099337,DY=-0.0106895,D=0.0145925</text>
</svg>
</body></html>
